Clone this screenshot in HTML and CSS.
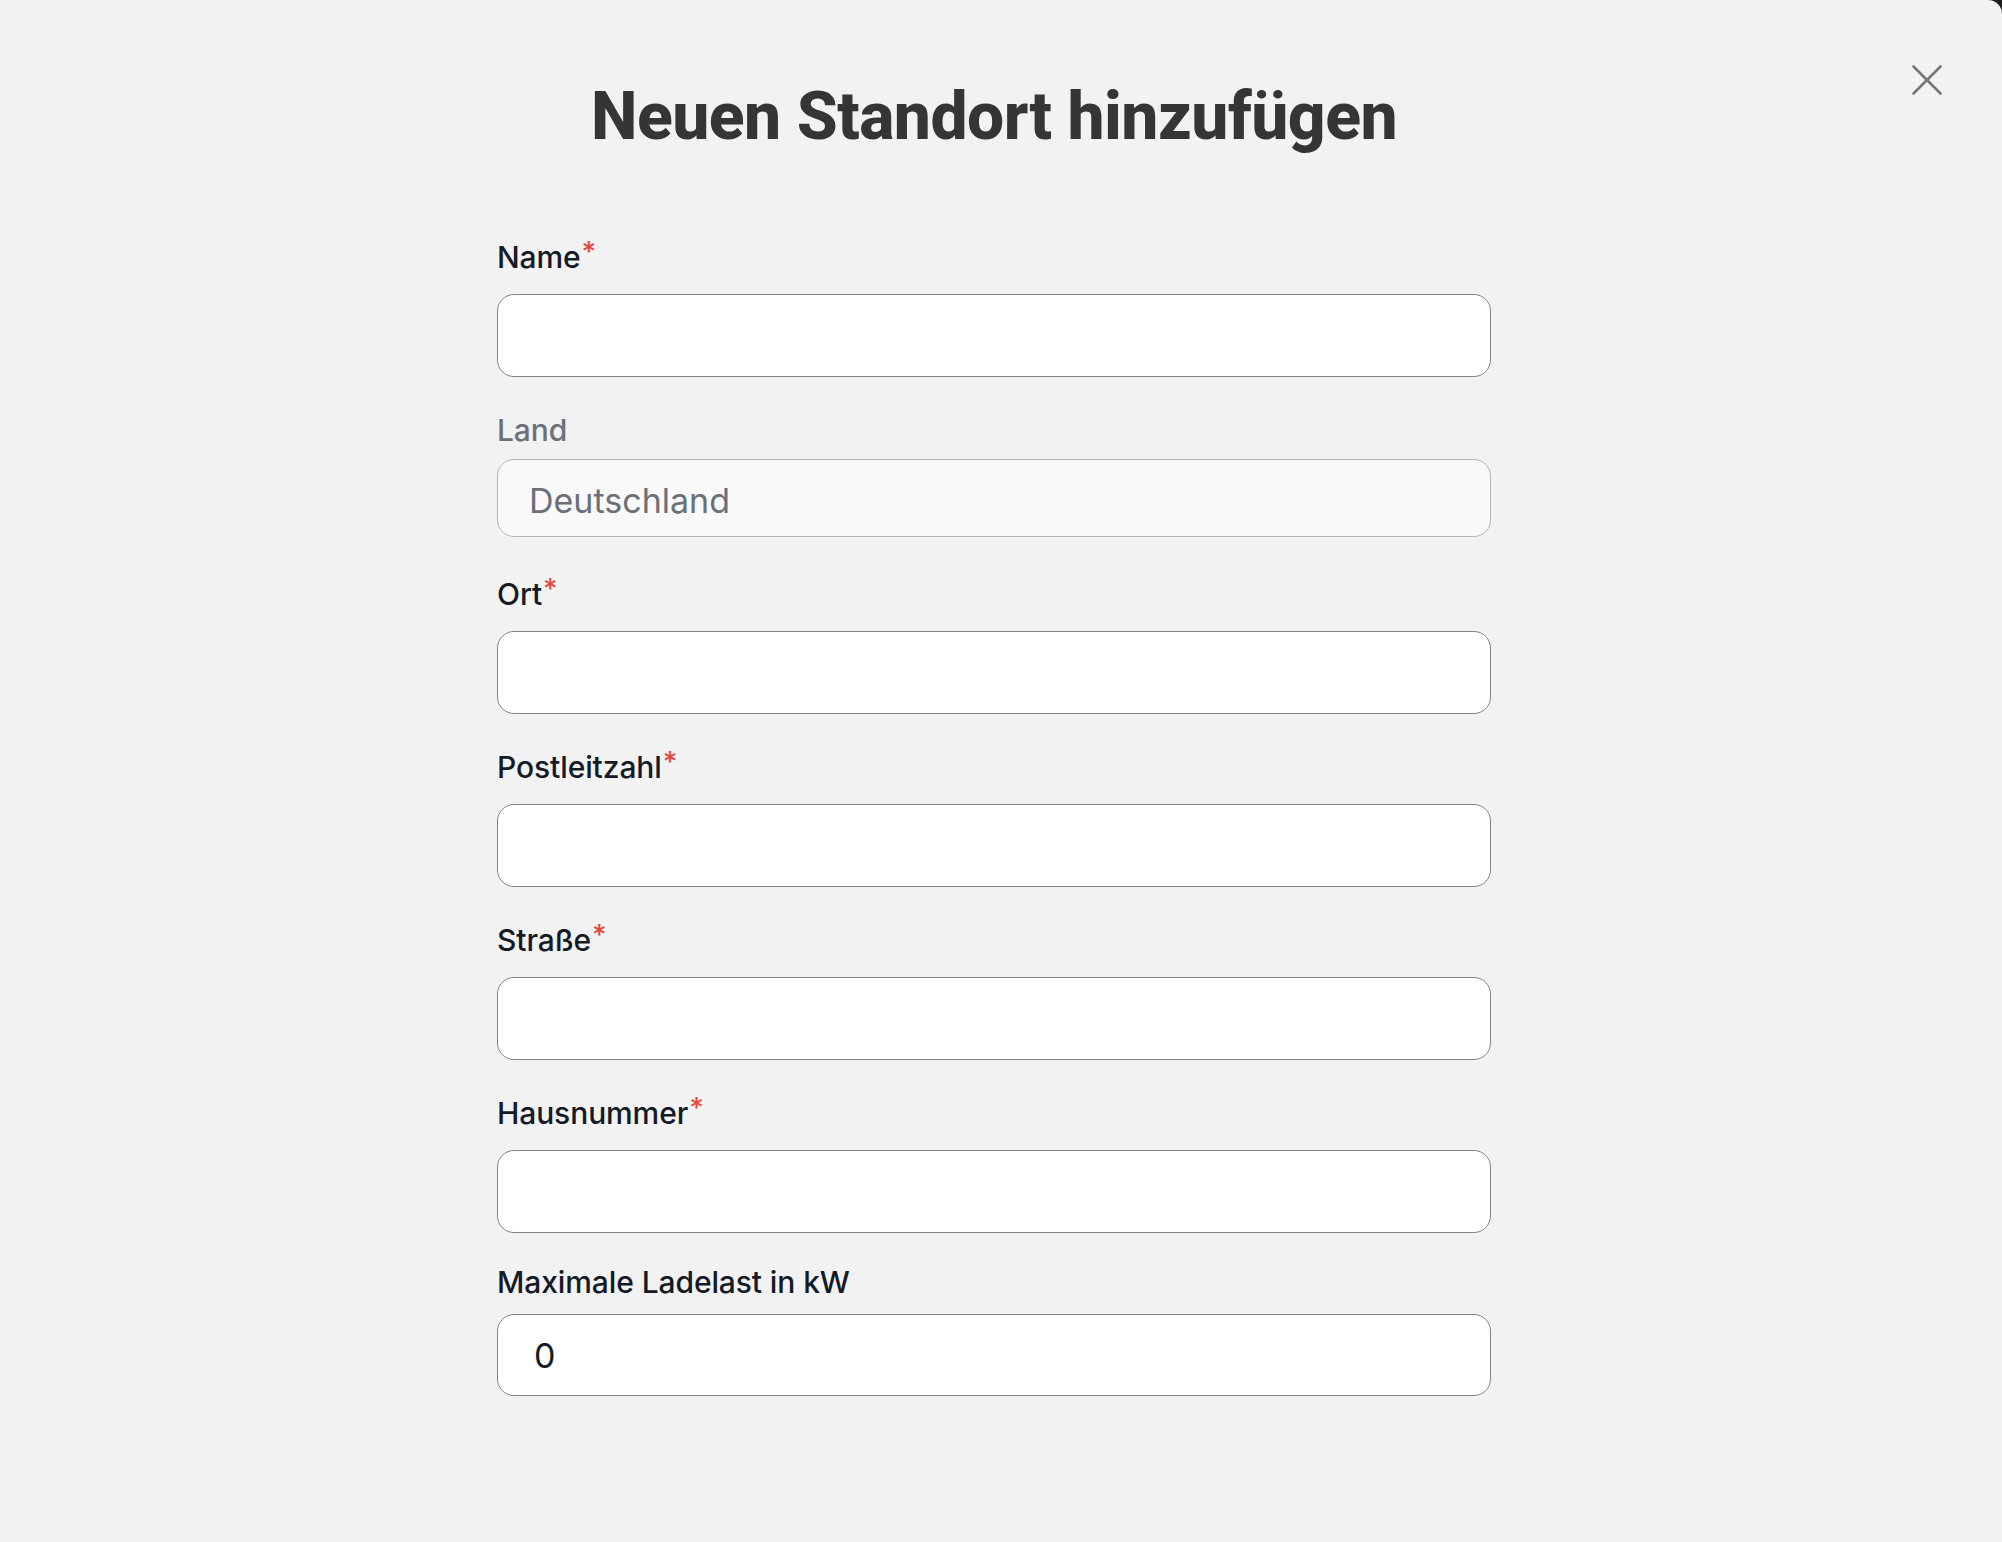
FILE: index.html
```html
<!DOCTYPE html>
<html lang="de">
<head>
<meta charset="utf-8">
<title>Neuen Standort hinzufügen</title>
<link rel="stylesheet" href="styles.css">
</head>
<body>
<div class="modal">
  <button class="close" type="button" aria-label="Schließen">
    <svg width="30" height="30" viewBox="0 0 30 30" aria-hidden="true">
      <path d="M1.5 1.5 L28.5 28.5 M28.5 1.5 L1.5 28.5" stroke="#767676" stroke-width="2.6" stroke-linecap="round" fill="none"/>
    </svg>
  </button>
  <h1 class="title">Neuen Standort hinzufügen</h1>
  <form class="form">
    <div class="field">
      <label class="label">Name<span class="req">*</span></label>
      <input class="input" type="text">
    </div>
    <div class="field field--land">
      <label class="label label--muted">Land</label>
      <input class="input input--disabled" type="text" value="Deutschland" disabled>
    </div>
    <div class="field field--after-land">
      <label class="label">Ort<span class="req">*</span></label>
      <input class="input" type="text">
    </div>
    <div class="field">
      <label class="label">Postleitzahl<span class="req">*</span></label>
      <input class="input" type="text">
    </div>
    <div class="field">
      <label class="label">Straße<span class="req">*</span></label>
      <input class="input" type="text">
    </div>
    <div class="field">
      <label class="label">Hausnummer<span class="req">*</span></label>
      <input class="input" type="text">
    </div>
    <div class="field field--max">
      <label class="label">Maximale Ladelast in kW</label>
      <input class="input input--number" type="text" value="0">
    </div>
  </form>
</div>
</body>
</html>
```

FILE: styles.css
```css
html {
  background: #1d1d1f;
}
body {
  margin: 0;
  font-family: "Inter", "Noto Sans", sans-serif;
}
.modal {
  position: relative;
  box-sizing: border-box;
  min-height: 100vh;
  background: #f2f2f2;
  border-top-right-radius: 14px;
  padding: 84px 14px 0 0;
}
.close {
  position: absolute;
  top: 65px;
  right: 60px;
  width: 30px;
  height: 30px;
  padding: 0;
  border: 0;
  background: none;
  display: flex;
  cursor: pointer;
}
.title {
  margin: 0;
  text-align: center;
  font-family: "Roboto", "Liberation Sans", sans-serif;
  font-weight: 800;
  font-size: 66px;
  line-height: 66px;
  color: #353535;
  letter-spacing: -0.5px;
}
.form {
  width: 994px;
  margin: 89px auto 0;
  display: flex;
  flex-direction: column;
  gap: 35px;
}
.field {
  display: flex;
  flex-direction: column;
  gap: 19px;
}
.field--land {
  gap: 11px;
}
.field--after-land {
  margin-top: 4px;
}
.field--max {
  margin-top: -4px;
  gap: 14px;
}
.label {
  font-size: 30px;
  line-height: 36px;
  font-weight: 500;
  color: #141a26;
  letter-spacing: -0.1px;
}
.label--muted {
  color: #6d7078;
}
.req {
  color: #e8473b;
  font-size: 28px;
  vertical-align: 0.2em;
  line-height: 0;
  margin-left: 1px;
}
.input {
  box-sizing: border-box;
  width: 100%;
  height: 83px;
  border: 1.5px solid #80858d;
  border-radius: 17px;
  background: #ffffff;
  padding: 0 31px;
  font-family: "Inter", "Noto Sans", sans-serif;
  font-size: 34px;
  color: #141a26;
  outline: none;
}
.input--disabled {
  height: 78px;
  padding-top: 4px;
  background: #f9f9f9;
  border-color: #b3b6bb;
  color: #6b6f77;
}
.input--disabled:disabled {
  color: #6b6f77;
  -webkit-text-fill-color: #6b6f77;
}
.input--number {
  height: 82px;
  padding-left: 36px;
}
```
